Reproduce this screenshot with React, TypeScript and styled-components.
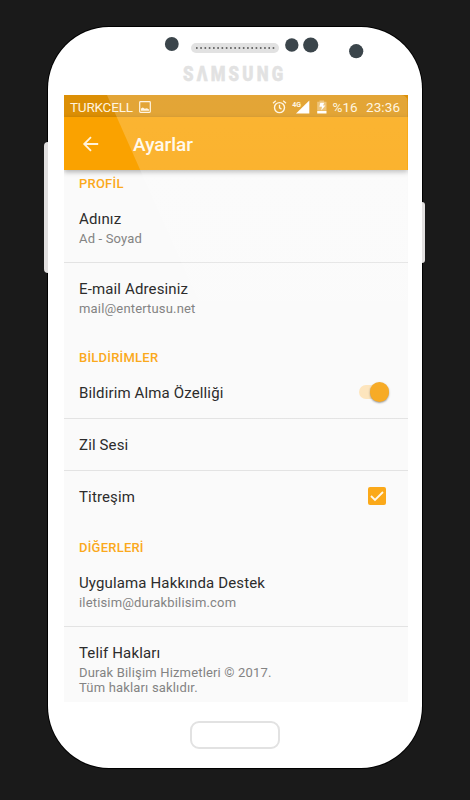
import React from "react";
import styled, { createGlobalStyle } from "styled-components";

const GlobalStyle = createGlobalStyle`
  * { box-sizing: border-box; }
  body { margin: 0; background: #1a1a1a; font-family: Roboto, "Liberation Sans", sans-serif; }
`;

const Stage = styled.main`
  height: 800px;
  padding: 27px 48px 0 48px;
  overflow: hidden;
  background: #1a1a1a;
`;

const Phone = styled.div`
  position: relative;
  display: flex;
  flex-direction: column;
  width: 374px;
  height: 741px;
  padding: 0 14.5px 0 16px;
  border-radius: 61px / 62px;
  background: #fff;
  box-shadow: 0 0 0 1px #000;
`;

const SideKey = styled.div<{ $side: "left" | "right" }>`
  position: absolute;
  ${(p) =>
    p.$side === "left"
      ? "left: -4px; top: 115px; height: 131px; width: 4px; border-radius: 4px 0 0 4px;"
      : "right: -3px; top: 175px; height: 61px; width: 3px; border-radius: 0 3px 3px 0;"}
  background: #e2e0e0;
`;

const Forehead = styled.header`
  position: relative;
  flex: none;
  display: flex;
  flex-direction: column;
  align-items: center;
  height: 68px;
`;

const Sensors = styled.svg`
  display: block;
  width: 343px;
  height: 37px;
`;

const Brand = styled.div`
  height: 20px;
  margin-left: -1.5px;
  font: 900 21px/20px Roboto, sans-serif;
  letter-spacing: 4px;
  color: #e2e2e2;
  -webkit-text-stroke: 0.5px #e2e2e2;
  transform: scaleX(0.8);
  white-space: nowrap;
`;

const Screen = styled.section`
  position: relative;
  flex: none;
  height: 607px;
  background: #fafafa;
  overflow: hidden;
`;

const Shine = styled.div`
  position: absolute;
  inset: 0;
  border-top-right-radius: 7px;
  background: linear-gradient(rgba(255, 255, 255, 0.2) 0, rgba(255, 255, 255, 0.18) 90px, rgba(255, 255, 255, 0) 350px);
  clip-path: polygon(43px 0, 100% 0, 100% 350px, 198px 350px);
  pointer-events: none;
`;

const StatusBar = styled.div`
  display: flex;
  align-items: center;
  height: 22px;
  padding: 1px 7px 0 6px;
  background: #dc8f05;
  color: #fff3dc;
  font-size: 13.5px;
  white-space: nowrap;
`;

const Carrier = styled.span`
  width: 69px;
  letter-spacing: -0.2px;
`;

const StatusIcons = styled.svg`
  flex: none;
  width: 56px;
  height: 16px;
  margin-left: auto;
  margin-right: 5px;
`;

const Battery = styled.span`
  width: 33.5px;
`;

const Clock = styled.span`
  width: 34.5px;
  letter-spacing: 0.1px;
`;

const AppBar = styled.div`
  position: relative;
  display: flex;
  align-items: center;
  height: 53px;
  padding-left: 17px;
  background: #faa200;
  box-shadow: 0 2px 5px rgba(0, 0, 0, 0.3);
`;

const BackIcon = styled.svg`
  width: 20px;
  height: 20px;
  margin-right: 32px;
`;

const Title = styled.h1`
  margin: 0;
  padding-top: 1px;
  font-size: 19px;
  font-weight: 500;
  color: #fff8e9;
`;

const SectionTitle = styled.h2<{ $height: number }>`
  display: flex;
  align-items: flex-end;
  height: ${(p) => p.$height}px;
  margin: 0;
  padding-left: 15px;
  font-size: 13px;
  font-weight: 500;
  line-height: 16px;
  letter-spacing: 0.22px;
  color: #faa91c;
`;

const Row = styled.div<{ $height: number; $divided?: boolean }>`
  display: flex;
  justify-content: space-between;
  height: ${(p) => p.$height}px;
  padding: 16px 0 0 15px;
  border-top: 1px solid ${(p) => (p.$divided ? "#e3e3e3" : "transparent")};
`;

const Label = styled.div`
  font-size: 15px;
  line-height: 20px;
  letter-spacing: 0.14px;
  color: #2c2c2c;
  white-space: nowrap;
`;

const Detail = styled.div`
  margin-top: 1.5px;
  font-size: 13px;
  line-height: 15.6px;
  letter-spacing: 0.17px;
  color: #838383;
`;

const Switch = styled.div`
  position: relative;
  width: 30px;
  height: 14px;
  margin: 2px 18.5px 0 0;
  border-radius: 7px;
  background: #fde4bb;

  &::after {
    content: "";
    position: absolute;
    top: -3px;
    right: 0;
    width: 19.5px;
    height: 19.5px;
    border-radius: 50%;
    background: #f7a81e;
    box-shadow: 0 1px 2px rgba(0, 0, 0, 0.4);
  }
`;

const Check = styled.svg`
  width: 18px;
  height: 18px;
  margin-right: 21.5px;
`;

const HomeKey = styled.div`
  width: 90px;
  height: 28px;
  margin: 19px auto 0 125.5px;
  border: 2px solid #e2e2e2;
  border-radius: 9px;
`;

type Item = { label: string; details?: string[]; control?: "switch" | "check"; height: number };

const sections: { title: string; height: number; items: Item[] }[] = [
  {
    title: "PROFİL",
    height: 22,
    items: [
      { label: "Adınız", details: ["Ad - Soyad"], height: 70 },
      { label: "E-mail Adresiniz", details: ["mail@entertusu.net"], height: 70 },
    ],
  },
  {
    title: "BİLDİRİMLER",
    height: 34,
    items: [
      { label: "Bildirim Alma Özelliği", control: "switch", height: 52 },
      { label: "Zil Sesi", height: 52 },
      { label: "Titreşim", control: "check", height: 52 },
    ],
  },
  {
    title: "DİĞERLERİ",
    height: 34,
    items: [
      { label: "Uygulama Hakkında Destek", details: ["iletisim@durakbilisim.com"], height: 70 },
      { label: "Telif Hakları", details: ["Durak Bilişim Hizmetleri © 2017.", "Tüm hakları saklıdır."], height: 76 },
    ],
  },
];

export default function App() {
  return (
    <>
      <GlobalStyle />
      <Stage>
        <Phone>
          <SideKey $side="left" />
          <SideKey $side="right" />
          <Forehead>
            <Sensors viewBox="64 27 343 37">
              <g fill="#3b454b">
                <circle cx="171.8" cy="44" r="6.9" />
                <circle cx="291.8" cy="45" r="6.7" />
                <circle cx="310.7" cy="45" r="7.6" />
                <circle cx="356.2" cy="51.2" r="7.1" />
              </g>
              <rect x="191" y="43" width="88" height="10" rx="5" fill="#e2e2e2" />
              <path d="M196 48H274.4" stroke="#444" strokeWidth="1.7" strokeDasharray="1.6 2.66" />
            </Sensors>
            <Brand>SΛMSUNG</Brand>
          </Forehead>
          <Screen>
            <StatusBar>
              <Carrier>TURKCELL</Carrier>
              <svg width="12" height="12" viewBox="0 0 12 12">
                <rect x="0.7" y="0.7" width="10.6" height="10.6" rx="0.8" fill="none" stroke="#fff3dc" strokeWidth="1.2" />
                <path d="M2 9.8V7.6l1.8-1 2 1.2L8 7.2l2 1.3v1.3z" fill="#fff3dc" />
              </svg>
              <StatusIcons viewBox="0 0 56 16" fill="none" stroke="#fff3dc">
                <circle cx="7.5" cy="8.6" r="5" strokeWidth="1.4" />
                <path d="M7.5 5.7v3.2l2 1.2M1 4.2 3.8 1.8M14 4.2l-2.8-2.4" strokeWidth="1.3" />
                <path d="M37.3 1.5v13H24z" fill="#fff" stroke="none" />
                <text x="20.3" y="7.5" fontSize="7" fontWeight="700" fill="#fff3dc" stroke="none">4G</text>
                <path d="M47.5 1.5h4.6v1.2h2.4v9h-9.3v-9h2.3z" fill="#fff3dc" fillOpacity=".4" stroke="none" />
                <path d="M45.2 12h9.3v2.5h-9.3z" fill="#fff" stroke="none" />
                <path d="M48.3 3.8h4L51 6.6h2.4l-4.2 5 .8-3.8h-2.6z" fill="#fff" stroke="none" />
              </StatusIcons>
              <Battery>%16</Battery>
              <Clock>23:36</Clock>
            </StatusBar>
            <AppBar>
              <BackIcon viewBox="0 0 20 20" fill="none" stroke="#fff3dc" strokeWidth="1.8">
                <path d="M17.2 10H3.6M10 3.2 3.2 10l6.8 6.8" />
              </BackIcon>
              <Title>Ayarlar</Title>
            </AppBar>
            {sections.map((section) => (
              <React.Fragment key={section.title}>
                <SectionTitle $height={section.height}>{section.title}</SectionTitle>
                {section.items.map((item, i) => (
                  <Row key={item.label} $height={item.height} $divided={i > 0}>
                    <div>
                      <Label>{item.label}</Label>
                      {item.details && (
                        <Detail>
                          {item.details.map((line) => (
                            <div key={line}>{line}</div>
                          ))}
                        </Detail>
                      )}
                    </div>
                    {item.control === "switch" && <Switch />}
                    {item.control === "check" && (
                      <Check viewBox="0 0 18 18">
                        <rect width="18" height="18" rx="2" fill="#fba919" />
                        <path d="m3 9 4 4 8-8" fill="none" stroke="#fff8e9" strokeWidth="1.8" />
                      </Check>
                    )}
                  </Row>
                ))}
              </React.Fragment>
            ))}
            <Shine />
          </Screen>
          <HomeKey />
        </Phone>
      </Stage>
    </>
  );
}
